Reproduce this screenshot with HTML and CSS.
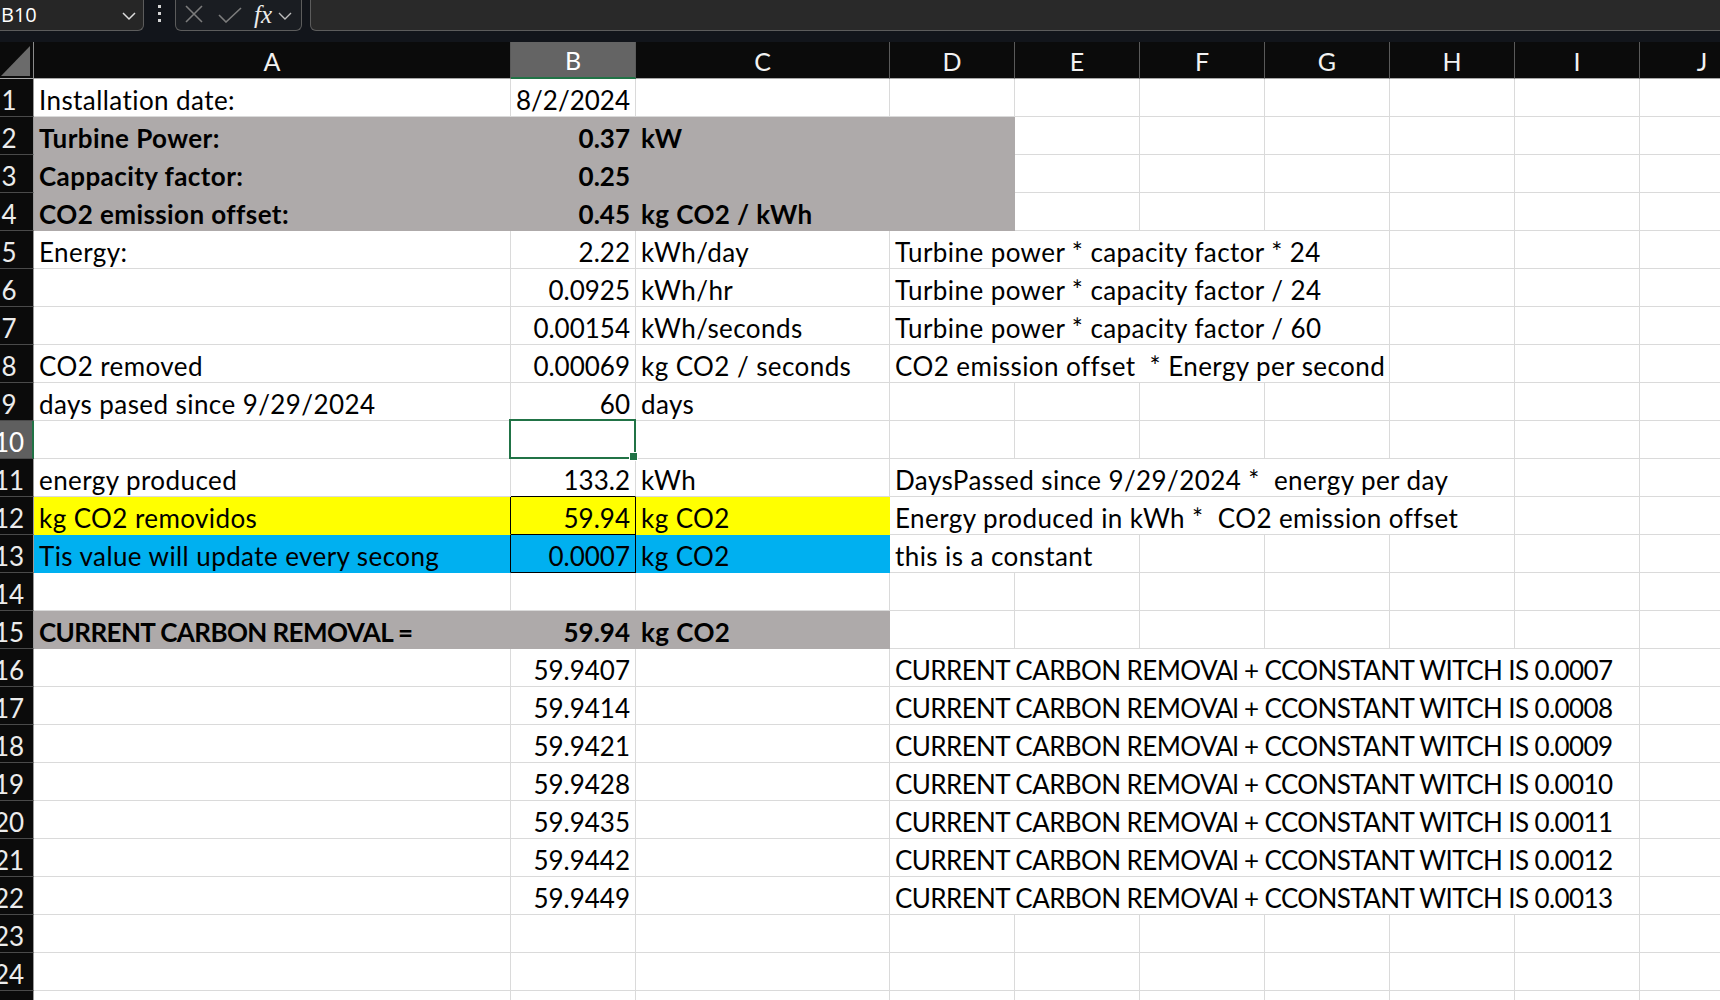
FILE: index.html
```html
<!DOCTYPE html>
<html>
<head>
<meta charset="utf-8">
<link rel="stylesheet" href="styles.css">
</head>
<body>
<div class="app">
  <div class="toolbar">
    <div class="namebox"><span class="nbtext">B10</span>
      <svg class="chev" width="14" height="9" viewBox="0 0 14 9"><polyline points="1,1 7,7 13,1" fill="none" stroke="#dcdcdc" stroke-width="1.5"/></svg>
    </div>
    <div class="dots"><i></i><i></i><i></i></div>
    <div class="fxgroup">
      <svg class="ic-x" width="18" height="18" viewBox="0 0 18 18"><path d="M1 1 L17 17 M17 1 L1 17" stroke="#7c7c7c" stroke-width="1.6" fill="none"/></svg>
      <svg class="ic-ok" width="24" height="16" viewBox="0 0 24 16"><path d="M1 8 L8 15 L23 1" stroke="#7c7c7c" stroke-width="1.6" fill="none"/></svg>
      <span class="fx">fx</span>
      <svg class="chev2" width="14" height="8" viewBox="0 0 14 8"><polyline points="1,1 7,7 13,1" fill="none" stroke="#bdbdbd" stroke-width="1.4"/></svg>
    </div>
    <div class="formula"></div>
  </div>

  <div class="grid colheads">
    <div class="ch corner"><svg width="30" height="32" viewBox="0 0 30 32"><polygon points="29,1 29,31 0,31" fill="#6b6b6b"/></svg></div>
    <div class="ch">A</div>
    <div class="ch chsel">B</div>
    <div class="ch">C</div>
    <div class="ch">D</div>
    <div class="ch">E</div>
    <div class="ch">F</div>
    <div class="ch">G</div>
    <div class="ch">H</div>
    <div class="ch">I</div>
    <div class="ch">J</div>
  </div>

  <div class="sheet">
    <div class="grid row">
      <div class="rh"><span>1</span></div>
      <div class="c">Installation date:</div>
      <div class="c num">8/2/2024</div>
      <div class="c"></div><div class="c"></div><div class="c"></div><div class="c"></div><div class="c"></div><div class="c"></div><div class="c"></div><div class="c"></div>
    </div>
    <div class="grid row">
      <div class="rh"><span>2</span></div>
      <div class="c gray b">Turbine Power:</div>
      <div class="c gray b num">0.37</div>
      <div class="c gray b">kW</div>
      <div class="c gray"></div>
      <div class="c"></div><div class="c"></div><div class="c"></div><div class="c"></div><div class="c"></div><div class="c"></div>
    </div>
    <div class="grid row">
      <div class="rh"><span>3</span></div>
      <div class="c gray b">Cappacity factor:</div>
      <div class="c gray b num">0.25</div>
      <div class="c gray b"></div>
      <div class="c gray"></div>
      <div class="c"></div><div class="c"></div><div class="c"></div><div class="c"></div><div class="c"></div><div class="c"></div>
    </div>
    <div class="grid row">
      <div class="rh"><span>4</span></div>
      <div class="c gray b">CO2 emission offset:</div>
      <div class="c gray b num">0.45</div>
      <div class="c gray b">kg CO2 / kWh</div>
      <div class="c gray"></div>
      <div class="c"></div><div class="c"></div><div class="c"></div><div class="c"></div><div class="c"></div><div class="c"></div>
    </div>
    <div class="grid row">
      <div class="rh"><span>5</span></div>
      <div class="c">Energy:</div>
      <div class="c num">2.22</div>
      <div class="c">kWh/day</div>
      <div class="c s4">Turbine power * capacity factor * 24</div>
      <div class="c"></div><div class="c"></div><div class="c"></div>
    </div>
    <div class="grid row">
      <div class="rh"><span>6</span></div>
      <div class="c"></div>
      <div class="c num">0.0925</div>
      <div class="c">kWh/hr</div>
      <div class="c s4">Turbine power * capacity factor / 24</div>
      <div class="c"></div><div class="c"></div><div class="c"></div>
    </div>
    <div class="grid row">
      <div class="rh"><span>7</span></div>
      <div class="c"></div>
      <div class="c num">0.00154</div>
      <div class="c">kWh/seconds</div>
      <div class="c s4">Turbine power * capacity factor / 60</div>
      <div class="c"></div><div class="c"></div><div class="c"></div>
    </div>
    <div class="grid row">
      <div class="rh"><span>8</span></div>
      <div class="c">CO2 removed</div>
      <div class="c num">0.00069</div>
      <div class="c">kg CO2 / seconds</div>
      <div class="c s4">CO2 emission offset &nbsp;* Energy per second</div>
      <div class="c"></div><div class="c"></div><div class="c"></div>
    </div>
    <div class="grid row">
      <div class="rh"><span>9</span></div>
      <div class="c">days pased since 9/29/2024</div>
      <div class="c num">60</div>
      <div class="c">days</div>
      <div class="c"></div><div class="c"></div><div class="c"></div><div class="c"></div><div class="c"></div><div class="c"></div><div class="c"></div>
    </div>
    <div class="grid row">
      <div class="rh rhsel"><span>10</span></div>
      <div class="c"></div>
      <div class="c sel"></div>
      <div class="c"></div><div class="c"></div><div class="c"></div><div class="c"></div><div class="c"></div><div class="c"></div><div class="c"></div><div class="c"></div>
    </div>
    <div class="grid row">
      <div class="rh"><span>11</span></div>
      <div class="c">energy produced</div>
      <div class="c num bb">133.2</div>
      <div class="c">kWh</div>
      <div class="c s5">DaysPassed since 9/29/2024 * &nbsp;energy per day</div>
      <div class="c"></div><div class="c"></div>
    </div>
    <div class="grid row">
      <div class="rh"><span>12</span></div>
      <div class="c yellow br">kg CO2 removidos</div>
      <div class="c yellow num box">59.94</div>
      <div class="c yellow">kg CO2</div>
      <div class="c s5">Energy produced in kWh * &nbsp;CO2 emission offset</div>
      <div class="c"></div><div class="c"></div>
    </div>
    <div class="grid row">
      <div class="rh"><span>13</span></div>
      <div class="c blue br">Tis value will update every secong</div>
      <div class="c blue num box">0.0007</div>
      <div class="c blue">kg CO2</div>
      <div class="c s2">this is a constant</div>
      <div class="c"></div><div class="c"></div><div class="c"></div><div class="c"></div><div class="c"></div>
    </div>
    <div class="grid row">
      <div class="rh"><span>14</span></div>
      <div class="c"></div><div class="c"></div><div class="c"></div><div class="c"></div><div class="c"></div><div class="c"></div><div class="c"></div><div class="c"></div><div class="c"></div><div class="c"></div>
    </div>
    <div class="grid row">
      <div class="rh"><span>15</span></div>
      <div class="c gray b caps">CURRENT CARBON REMOVAL =</div>
      <div class="c gray b num">59.94</div>
      <div class="c gray b">kg CO2</div>
      <div class="c"></div><div class="c"></div><div class="c"></div><div class="c"></div><div class="c"></div><div class="c"></div><div class="c"></div>
    </div>
    <div class="grid row">
      <div class="rh"><span>16</span></div>
      <div class="c"></div><div class="c num">59.9407</div><div class="c"></div>
      <div class="c s6 caps">CURRENT CARBON REMOVAl + CCONSTANT WITCH IS 0.0007</div>
      <div class="c"></div>
    </div>
    <div class="grid row">
      <div class="rh"><span>17</span></div>
      <div class="c"></div><div class="c num">59.9414</div><div class="c"></div>
      <div class="c s6 caps">CURRENT CARBON REMOVAl + CCONSTANT WITCH IS 0.0008</div>
      <div class="c"></div>
    </div>
    <div class="grid row">
      <div class="rh"><span>18</span></div>
      <div class="c"></div><div class="c num">59.9421</div><div class="c"></div>
      <div class="c s6 caps">CURRENT CARBON REMOVAl + CCONSTANT WITCH IS 0.0009</div>
      <div class="c"></div>
    </div>
    <div class="grid row">
      <div class="rh"><span>19</span></div>
      <div class="c"></div><div class="c num">59.9428</div><div class="c"></div>
      <div class="c s6 caps">CURRENT CARBON REMOVAl + CCONSTANT WITCH IS 0.0010</div>
      <div class="c"></div>
    </div>
    <div class="grid row">
      <div class="rh"><span>20</span></div>
      <div class="c"></div><div class="c num">59.9435</div><div class="c"></div>
      <div class="c s6 caps">CURRENT CARBON REMOVAl + CCONSTANT WITCH IS 0.0011</div>
      <div class="c"></div>
    </div>
    <div class="grid row">
      <div class="rh"><span>21</span></div>
      <div class="c"></div><div class="c num">59.9442</div><div class="c"></div>
      <div class="c s6 caps">CURRENT CARBON REMOVAl + CCONSTANT WITCH IS 0.0012</div>
      <div class="c"></div>
    </div>
    <div class="grid row">
      <div class="rh"><span>22</span></div>
      <div class="c"></div><div class="c num">59.9449</div><div class="c"></div>
      <div class="c s6 caps">CURRENT CARBON REMOVAl + CCONSTANT WITCH IS 0.0013</div>
      <div class="c"></div>
    </div>
    <div class="grid row">
      <div class="rh"><span>23</span></div>
      <div class="c"></div><div class="c"></div><div class="c"></div><div class="c"></div><div class="c"></div><div class="c"></div><div class="c"></div><div class="c"></div><div class="c"></div><div class="c"></div>
    </div>
    <div class="grid row">
      <div class="rh"><span>24</span></div>
      <div class="c"></div><div class="c"></div><div class="c"></div><div class="c"></div><div class="c"></div><div class="c"></div><div class="c"></div><div class="c"></div><div class="c"></div><div class="c"></div>
    </div>
    <div class="grid row">
      <div class="rh"><span>25</span></div>
      <div class="c"></div><div class="c"></div><div class="c"></div><div class="c"></div><div class="c"></div><div class="c"></div><div class="c"></div><div class="c"></div><div class="c"></div><div class="c"></div>
    </div>
  </div>
</div>
</body>
</html>
```

FILE: styles.css
```css
* { box-sizing: border-box; }
html, body { margin: 0; padding: 0; background: #ffffff; }
.app {
  width: 1720px;
  height: 1000px;
  overflow: hidden;
  font-family: Lato, "Open Sans", sans-serif;
  font-size: 26px;
  color: #000;
}

/* toolbar */
.toolbar {
  height: 42px;
  background: #12151b;
  display: flex;
  align-items: flex-start;
  overflow: hidden;
}
.namebox {
  width: 150px;
  height: 31px;
  margin-left: -6px;
  flex: none;
  background: #262626;
  border: 1px solid #5c5c5c;
  border-top: none;
  border-radius: 0 0 6px 6px;
  display: flex;
  align-items: center;
  padding-left: 6px;
  padding-right: 7px;
  justify-content: space-between;
}
.nbtext {
  font-family: "Open Sans", "Noto Sans", sans-serif;
  font-size: 20px;
  color: #ffffff;
  line-height: 1;
  margin-top: -1px;
}
.chev { margin-top: 2px; }
.dots {
  width: 31px;
  height: 31px;
  flex: none;
  display: flex;
  flex-direction: column;
  align-items: center;
  padding-top: 5px;
  gap: 4px;
}
.dots i {
  display: block;
  width: 3px;
  height: 3px;
  background: #d4d4d4;
}
.fxgroup {
  width: 127px;
  height: 31px;
  flex: none;
  border: 1px solid #5c5c5c;
  border-top: none;
  border-radius: 0 0 6px 6px;
  background: #1a1d22;
  display: flex;
  align-items: center;
  padding-left: 9px;
}
.ic-x { margin-right: 15px; margin-top: -2px; }
.ic-ok { margin-right: 12px; }
.fx {
  font-family: "Liberation Serif", "DejaVu Serif", serif;
  font-style: italic;
  font-size: 25px;
  color: #ececec;
  line-height: 26px;
  padding-right: 2px;
  margin-right: 4px;
  margin-top: 0;
}
.chev2 { margin-top: 1px; }
.formula {
  flex: 1;
  height: 31px;
  margin-left: 8px;
  margin-right: -10px;
  background: #292929;
  border: 1px solid #5c5c5c;
  border-top: none;
  border-radius: 0 0 6px 6px;
}

/* grid */
.grid {
  display: grid;
  grid-template-columns: 34px 477px 125px 254px 125px 125px 125px 125px 125px 125px 125px;
}
.colheads {
  height: 37px;
  background: #0b0b0b;
}
.ch {
  border-right: 1px solid #5a5a5a;
  border-bottom: 1px solid #a8a8a8;
  color: #f2f2f2;
  font-size: 25px;
  display: flex;
  align-items: center;
  justify-content: center;
  line-height: 1;
  padding-top: 2px;
}
.ch.corner {
  border-right: 1px solid #8a8a8a;
  align-items: flex-end;
  justify-content: flex-end;
  padding: 0 2px 1px 0;
}
.ch.chsel {
  background: #646464;
  border-bottom: 2px solid #217346;
  color: #ffffff;
}

.row { height: 38px; }
.rh {
  background: #0b0b0b;
  border-bottom: 1px solid #4a4a4a;
  border-right: 1px solid #9a9a9a;
  color: #ececec;
  font-size: 26px;
  overflow: hidden;
  display: flex;
  align-items: flex-end;
  line-height: 25px;
  padding-bottom: 3px;
}
.rh span {
  display: block;
  flex: none;
  width: 44px;
  margin-left: -13px;
  text-align: center;
  white-space: nowrap;
}
.rh.rhsel {
  background: #5f5f5f;
  border-right: 2px solid #217346;
  color: #ffffff;
}

.c {
  border-right: 1px solid #dadada;
  border-bottom: 1px solid #dadada;
  padding: 0 4px 3px 5px;
  white-space: nowrap;
  display: flex;
  align-items: flex-end;
  line-height: 25px;
  letter-spacing: 0.42px;
  min-width: 0;
}
.c.num { justify-content: flex-end; padding-right: 5px; letter-spacing: 0; }
.c.caps { letter-spacing: -0.6px; }
.c.b { font-weight: 700; }
.c.gray { background: #aeaaaa; border-color: #aeaaaa; }
.c.yellow { background: #ffff00; border-color: #ffff00; }
.c.blue { background: #00b0f0; border-color: #00b0f0; }
.c.br { border-right-color: #000; }
.c.bb { border-bottom-color: #000; }
.c.box { border-right-color: #000; border-bottom-color: #000; }
.c.s2 { grid-column: span 2; }
.c.s4 { grid-column: span 4; }
.c.s5 { grid-column: span 5; }
.c.s6 { grid-column: span 6; }

.c.sel { position: relative; }
.c.sel::after {
  content: "";
  position: absolute;
  left: -2px;
  top: -2px;
  right: -1px;
  bottom: -1px;
  border: 2px solid #217346;
}
.c.sel::before {
  content: "";
  position: absolute;
  right: -3px;
  bottom: -3px;
  width: 7px;
  height: 7px;
  background: #217346;
  border: 1px solid #ffffff;
  z-index: 2;
}
```
